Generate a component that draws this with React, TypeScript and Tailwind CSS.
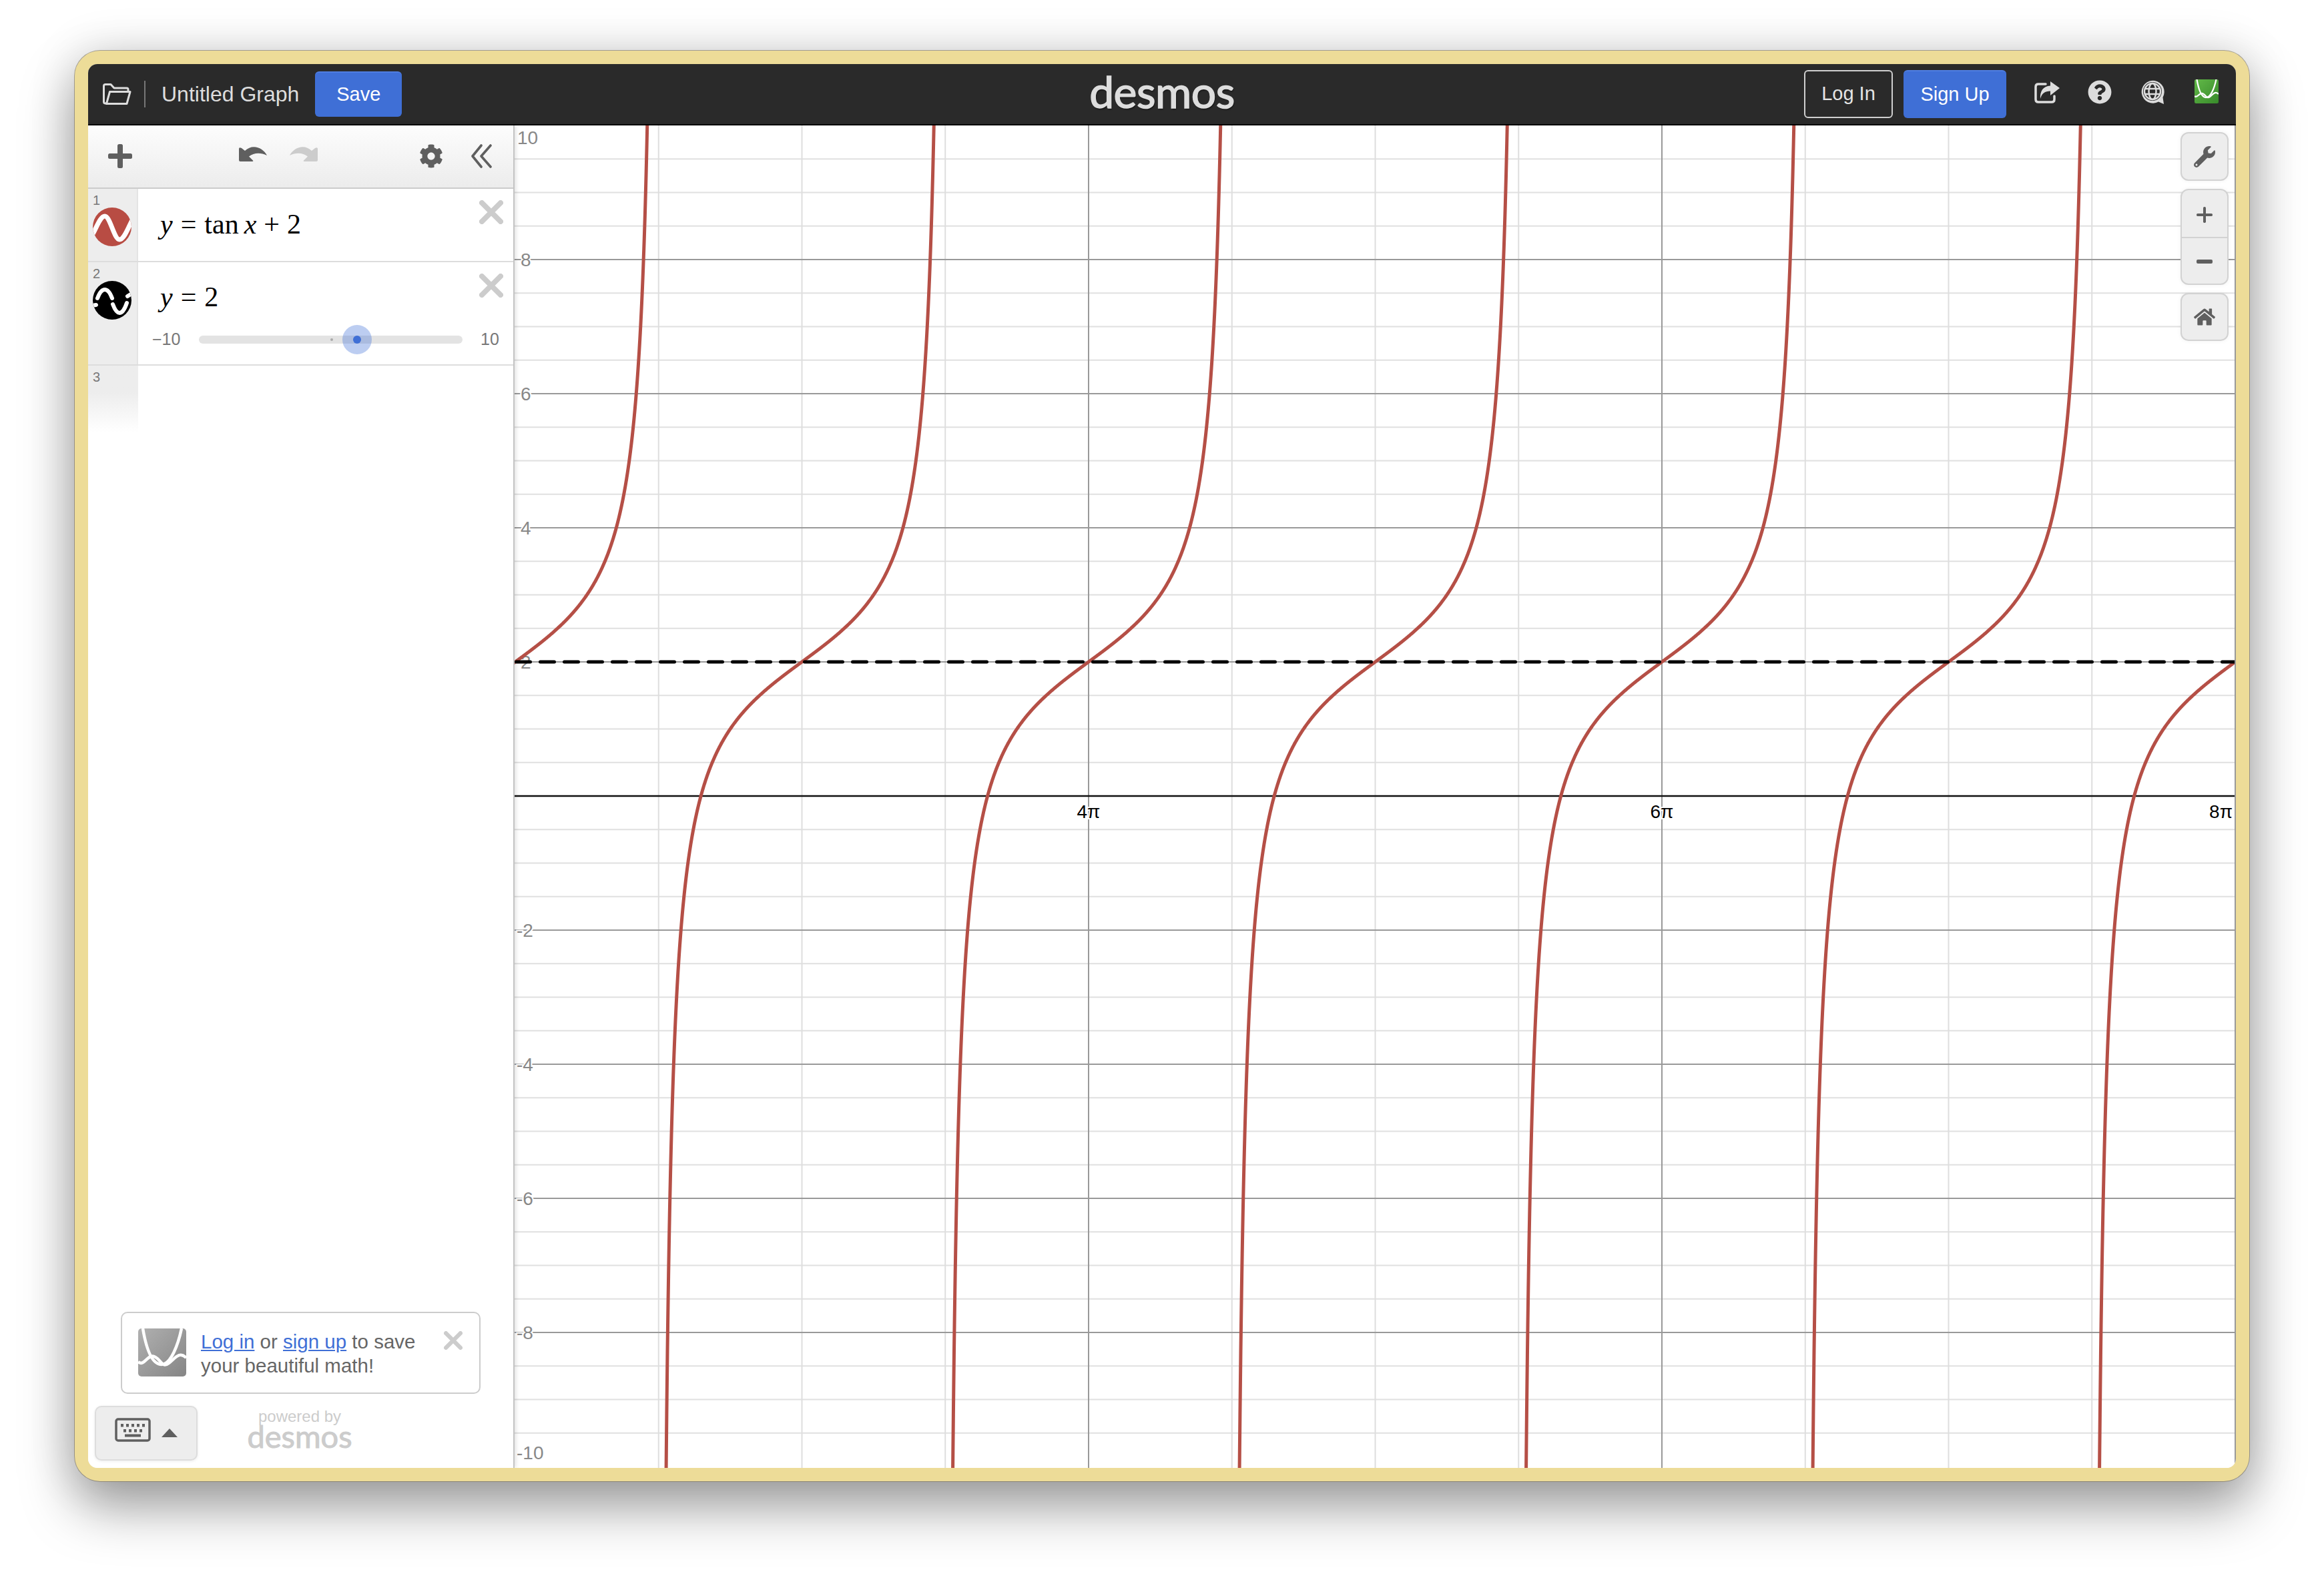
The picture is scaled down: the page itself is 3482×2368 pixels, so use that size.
import React from "react";
import { FaCog, FaQuestionCircle, FaWrench, FaHome } from "react-icons/fa";

const W = 2577;
const H = 2012;
const AX = 1005;
const UY = 100.5;
const PI_PX = 429.5;
const UX = PI_PX / Math.PI;

function branch(n: number) {
  const cx = 1 + PI_PX * n;
  const pts: string[] = [];
  for (let t = -1.55; t <= 1.55; t += 0.004) {
    const y = AX - UY * (Math.tan(t) + 2);
    if (y < -40 || y > H + 40) continue;
    pts.push(`${(cx + t * UX).toFixed(2)},${y.toFixed(2)}`);
  }
  return "M" + pts.join("L");
}

function Graph() {
  const hs: number[] = [];
  for (let k = -19; k <= 19; k++) hs.push(k);
  const vs: number[] = [];
  for (let k = 1; k <= 12; k++) vs.push(k);
  const ylabels = [8, 6, 4, 2, -2, -4, -6, -8];
  const labelStyle = { paintOrder: "stroke" as const, stroke: "#fff", strokeWidth: 4 };
  return (
    <svg width={W} height={H} viewBox={`0 0 ${W} ${H}`} className="block" fontFamily="'Liberation Sans', Arial, sans-serif">
      {hs.map((k) =>
        k === 0 || k % 4 === 0 ? null : (
          <line key={k} x1={0} x2={W} y1={AX - (k * UY) / 2} y2={AX - (k * UY) / 2} stroke="#e0e0e0" strokeWidth={2} />
        )
      )}
      {vs.map((k) =>
        k % 4 === 0 ? null : (
          <line key={k} x1={1 + (k * PI_PX) / 2} x2={1 + (k * PI_PX) / 2} y1={0} y2={H} stroke="#dedede" strokeWidth={2} />
        )
      )}
      {hs.map((k) =>
        k !== 0 && k % 4 === 0 ? (
          <line key={k} x1={0} x2={W} y1={AX - (k * UY) / 2} y2={AX - (k * UY) / 2} stroke="#999" strokeWidth={2} />
        ) : null
      )}
      {[4, 8].map((k) => (
        <line key={k} x1={1 + (k * PI_PX) / 2} x2={1 + (k * PI_PX) / 2} y1={0} y2={H} stroke="#999" strokeWidth={2} />
      ))}
      <line x1={0} x2={W} y1={AX} y2={AX} stroke="#111" strokeWidth={2.5} />
      {ylabels.map((v) => (
        <text key={v} x={v < 0 ? 3 : 9} y={AX - v * UY + 10} fontSize={28} fill="#888" style={labelStyle}>
          {v}
        </text>
      ))}
      <text x={4} y={28} fontSize={28} fill="#888" style={labelStyle}>10</text>
      <text x={3} y={1999} fontSize={28} fill="#888" style={labelStyle}>-10</text>
      <text x={860} y={AX + 33} textAnchor="middle" fontSize={28} fill="#000" style={labelStyle}>4π</text>
      <text x={1719} y={AX + 33} textAnchor="middle" fontSize={28} fill="#000" style={labelStyle}>6π</text>
      <text x={2574} y={AX + 33} textAnchor="end" fontSize={28} fill="#000" style={labelStyle}>8π</text>
      {[0, 1, 2, 3, 4, 5, 6].map((n) => (
        <path key={n} d={branch(n)} fill="none" stroke="#b54f46" strokeWidth={5} />
      ))}
      <line x1={2.5} x2={W} y1={AX - 2 * UY} y2={AX - 2 * UY} stroke="#000" strokeWidth={5} strokeDasharray="21 15" strokeLinecap="round" />
    </svg>
  );
}

function Plus({ size = 36, color = "#5f5f5f", t = 8 }: { size?: number; color?: string; t?: number }) {
  return (
    <svg width={size} height={size} viewBox="0 0 36 36">
      <rect x={(36 - t) / 2} y={0} width={t} height={36} rx={2.5} fill={color} />
      <rect x={0} y={(36 - t) / 2} width={36} height={t} rx={2.5} fill={color} />
    </svg>
  );
}

function Cross({ size = 36, w = 8 }: { size?: number; w?: number }) {
  return (
    <svg width={size} height={size} viewBox="0 0 36 36">
      <path d="M4 4L32 32M32 4L4 32" stroke="#cccccc" strokeWidth={w} strokeLinecap="round" fill="none" />
    </svg>
  );
}

function Folder() {
  return (
    <svg width={43} height={32} viewBox="0 0 43 32" fill="none" stroke="#dddddd" strokeWidth={3} strokeLinejoin="round">
      <path d="M7 30H4Q1.5 30 1.5 27.500V4Q1.500 1.500 4 1.500H12L17 7H36Q38 7 38 9V12" />
      <path d="M10.500 12.500H41L36 30.500H5.500Z" />
    </svg>
  );
}

function GlobeChat() {
  return (
    <svg width={38} height={38} viewBox="0 0 38 38" fill="none" stroke="#dddddd">
      <path d="M35 37L27 33.500A17 17 0 1 1 33.500 27Z" fill="#dddddd" stroke="none" />
      <circle cx={18} cy={18} r={14} fill="#2a2a2a" stroke="none" />
      <circle cx={18} cy={18} r={12} strokeWidth={2.500} />
      <ellipse cx={18} cy={18} rx={5.500} ry={12} strokeWidth={2.500} />
      <path d="M6 14H30M6 22H30" strokeWidth={2.500} />
    </svg>
  );
}

function Share() {
  return (
    <svg width={38} height={33} viewBox="0 0 38 33" fill="none">
      <path d="M17 4H6Q2 4 2 8V27Q2 31 6 31H26Q30 31 30 27V22" stroke="#dddddd" strokeWidth={3.500} strokeLinecap="round" />
      <path d="M24 0L38 10L24 21V14.500C16 14.500 11 18 9 26C8 15 13 7 24 6.500Z" fill="#dddddd" />
    </svg>
  );
}

function Undo({ color, flip }: { color: string; flip?: boolean }) {
  return (
    <svg width={42} height={24} viewBox="0 0 42 24" className={flip ? "-scale-x-100" : ""}>
      <path d="M0 5V22Q0 24 2 24H20Q22 24 21 22.500L15 16.500C22 11 32 10 42 15C36 3 20 -3 9 8L4 4Q0 2 0 5Z" fill={color} />
    </svg>
  );
}

function Logo({ from, to, id, size }: { from: string; to: string; id: string; size: number }) {
  return (
    <svg width={size} height={size} viewBox="0 0 72 72">
      <defs>
        <linearGradient id={id} x1="0" y1="0" x2="1" y2="1">
          <stop offset="0" stopColor={from} />
          <stop offset="1" stopColor={to} />
        </linearGradient>
      </defs>
      <rect width={72} height={72} rx={5} fill={`url(#${id})`} />
      <path d="M7 0C11 24 19 54 35 54C49 54 60 24 65 0" fill="none" stroke="#fff" strokeWidth={4.500} />
      <path d="M0 50C9 58 14 38 24 42S36 60 46 52S62 34 72 44" fill="none" stroke="#fff" strokeWidth={4.500} />
    </svg>
  );
}

function ExprIcon({ bg, dashed }: { bg: string; dashed?: boolean }) {
  const id = dashed ? "cb" : "cr";
  return (
    <svg width={58} height={58} viewBox="0 0 58 58" className="block">
      <clipPath id={id}>
        <circle cx={29} cy={29} r={29} />
      </clipPath>
      <circle cx={29} cy={29} r={29} fill={bg} />
      <g clipPath={`url(#${id})`} fill="none" stroke="#fff" strokeWidth={dashed ? 6 : 7} strokeLinecap="round">
        {dashed ? (
          <>
            <path d="M7 26C10 18 14 13 18 13C22 13 26 18 29 26" />
            <path d="M30 35C33 43 36 48 40 48C44 48 48 42 51 33" />
            <path d="M52 23L60 18" />
            <path d="M-2 37L5 36" />
          </>
        ) : (
          <path d="M-4 46C4 36 10 13 18 13C26 13 32 48 40 48C48 48 54 26 62 14" />
        )}
      </g>
    </svg>
  );
}

function Keyboard() {
  const r1 = [10, 18, 26, 34, 42];
  const r2 = [14, 22, 30, 38];
  return (
    <svg width={54} height={36} viewBox="0 0 54 36">
      <rect x={2} y={2} width={50} height={32} rx={3} fill="none" stroke="#5f5f5f" strokeWidth={3.500} />
      {r1.map((x) => <rect key={x} x={x - 1} y={9} width={4} height={4.500} fill="#5f5f5f" />)}
      {r2.map((x) => <rect key={x} x={x - 1} y={17} width={4} height={4.500} fill="#5f5f5f" />)}
      <rect x={15} y={24.500} width={24} height={4} fill="#5f5f5f" />
    </svg>
  );
}

function ToolBtn({ children, className }: { children: React.ReactNode; className: string }) {
  return (
    <div className={"flex items-center justify-center bg-[#ededed] border-2 border-[#d2d2d2] shadow-[0_0_6px_rgba(0,0,0,0.06)] " + className}>
      {children}
    </div>
  );
}

export default function App() {
  return (
    <div className="w-[3482px] h-[2368px] bg-white pl-[112px] pt-[76px] font-['Liberation_Sans',Arial,sans-serif]">
      <div className="w-[3258px] h-[2144px] rounded-[38px] border-[20px] border-[#eddc98] bg-[#eddc98] shadow-[0_0_0_1px_rgba(110,100,80,0.55),0_40px_80px_rgba(0,0,0,0.36),0_0_70px_rgba(0,0,0,0.14)]">
        <div className="w-full h-full rounded-[14px] overflow-hidden bg-white flex flex-col">
          {/* Header */}
          <header className="h-[92px] shrink-0 bg-[#2a2a2a] border-b-2 border-black grid grid-cols-[1fr_auto_1fr] items-center">
            <div className="flex items-center pl-[22px]">
              <Folder />
              <div className="w-[2px] h-[40px] bg-[#777] ml-[19px]" />
              <span className="ml-[24px] text-[32px] leading-none text-[#dddddd]">Untitled Graph</span>
              <button className="ml-[24px] w-[130px] h-[68px] rounded-[6px] bg-[#3f6fd6] border-t-2 border-[#4f7de0] text-white text-[29px]">Save</button>
            </div>
            <div className="text-[66px] leading-none font-['Lato',sans-serif] text-[#dddddd] tracking-[-0.5px] [-webkit-text-stroke:1.5px_#dddddd] -mt-[9px] [text-shadow:1px_2px_2px_rgba(0,0,0,0.6)]">desmos</div>
            <div className="flex items-center justify-end pr-[26px]">
              <button className="w-[133px] h-[72px] rounded-[6px] border-2 border-[#cfcfcf] text-[#e4e4e4] text-[29px]">Log In</button>
              <button className="ml-[16px] w-[154px] h-[72px] rounded-[6px] bg-[#3f6fd6] border-t-2 border-[#4f7de0] text-white text-[29px]">Sign Up</button>
              <div className="ml-[42px] -mt-[6px]"><Share /></div>
              <div className="ml-[42px] -mt-[6px]"><FaQuestionCircle size={36} color="#dddddd" /></div>
              <div className="ml-[43px] -mt-[6px]"><GlobeChat /></div>
              <div className="ml-[43px] -mt-[8px]"><Logo id="lg" from="#62b948" to="#388a2b" size={36} /></div>
            </div>
          </header>

          <div className="flex-1 flex min-h-0">
            {/* Expression panel */}
            <aside className="relative z-10 w-[639px] shrink-0 bg-white border-r-2 border-[#c4c4c4] shadow-[2px_0_6px_rgba(0,0,0,0.12)] flex flex-col">
              <div className="h-[95px] shrink-0 bg-gradient-to-b from-[#fdfdfd] to-[#ececec] border-b-2 border-[#cccccc] flex items-center pl-[30px] pb-[1px]">
                <Plus />
                <div className="ml-[160px] -mt-[8px]"><Undo color="#5f5f5f" /></div>
                <div className="ml-[34px] -mt-[8px]"><Undo color="#cccccc" flip /></div>
                <div className="ml-[152px]"><FaCog size={36} color="#5f5f5f" /></div>
                <svg className="ml-[41px]" width={32} height={36} viewBox="0 0 32 36" fill="none" stroke="#5f5f5f" strokeWidth={3.600} strokeLinecap="round" strokeLinejoin="round">
                  <path d="M16 2L3 18L16 34" />
                  <path d="M30 2L16 18L30 34" />
                </svg>
              </div>

              {/* Row 1 */}
              <div className="h-[110px] shrink-0 flex border-b-2 border-[#dddddd]">
                <div className="w-[75px] shrink-0 bg-[#ededed] border-r-2 border-[#e4e4e4] pl-[7px]">
                  <div className="text-[20px] leading-none text-[#777] pt-[7px] h-[28px]">1</div>
                  <ExprIcon bg="#b84c43" />
                </div>
                <div className="flex-1 relative pl-[33px] pt-[29px] font-['Liberation_Serif',serif] text-[42px] leading-[48px] text-black whitespace-nowrap">
                  <i>y</i><span className="mx-[12px]">=</span><span>tan</span><i className="ml-[8px]">x</i><span className="mx-[11px]">+</span><span>2</span>
                  <div className="absolute right-[15px] top-[17px]"><Cross /></div>
                </div>
              </div>

              {/* Row 2 */}
              <div className="h-[155px] shrink-0 flex border-b-2 border-[#dddddd]">
                <div className="w-[75px] shrink-0 bg-[#ededed] border-r-2 border-[#e4e4e4] pl-[7px]">
                  <div className="text-[20px] leading-none text-[#777] pt-[7px] h-[28px]">2</div>
                  <ExprIcon bg="#000000" dashed />
                </div>
                <div className="flex-1 relative pt-[28px] font-['Liberation_Serif',serif] text-[42px] leading-[48px] text-black whitespace-nowrap">
                  <div className="pl-[33px]">
                    <i>y</i><span className="mx-[12px]">=</span><span>2</span>
                  </div>
                  <div className="absolute right-[15px] top-[17px]"><Cross /></div>
                  <div className="mt-[27px] pl-[21px] flex items-center font-['Liberation_Sans',Arial,sans-serif] text-[25px] leading-none text-[#777]">
                    <span className="w-[44px]">−10</span>
                    <div className="ml-[26px] w-[395px] h-[12px] rounded-full bg-[#e3e3e3] relative">
                      <div className="absolute left-[197px] top-[4px] w-[4px] h-[4px] rounded-full bg-[#aaa]" />
                      <div className="absolute left-[215px] top-[-16px] w-[44px] h-[44px] rounded-full bg-[#3f6fd6]/35 flex items-center justify-center">
                        <div className="w-[12px] h-[12px] rounded-full bg-[#3f6fd6]" />
                      </div>
                    </div>
                    <span className="ml-[27px]">10</span>
                  </div>
                </div>
              </div>

              {/* Row 3 */}
              <div className="h-[100px] shrink-0 flex">
                <div className="w-[75px] shrink-0 bg-gradient-to-b from-[#ededed] from-40% to-white text-[20px] leading-none text-[#777] pt-[7px] pl-[7px]">3</div>
              </div>

              <div className="flex-1" />

              {/* Notice */}
              <div className="relative ml-[49px] w-[539px] h-[123px] shrink-0 rounded-[10px] border-2 border-[#cccccc] flex items-start pl-[24px] pt-[23px]">
                <Logo id="lg2" from="#b0b0b0" to="#858585" size={72} />
                <div className="ml-[22px] mt-[2px] text-[29.5px] leading-[36px] text-[#666]">
                  <a className="text-[#3f6fd6] underline">Log in</a> or <a className="text-[#3f6fd6] underline">sign up</a> to save
                  <br />
                  your beautiful math!
                </div>
                <div className="absolute right-[25px] top-[27px]"><Cross size={28} w={8} /></div>
              </div>

              {/* Keyboard row */}
              <div className="flex ml-[10px] mt-[18px] mb-[11px] shrink-0">
                <div className="w-[154px] h-[82px] rounded-[10px] bg-[#ededed] border-2 border-[#dddddd] shadow-[0_1px_4px_rgba(0,0,0,0.08)] flex items-start pl-[28px] pt-[16px]">
                  <Keyboard />
                  <svg className="ml-[16px] mt-[16px]" width={24} height={13} viewBox="0 0 24 13"><path d="M12 0L24 13H0Z" fill="#5f5f5f" /></svg>
                </div>
                <div className="ml-[75px] w-[156px] flex flex-col items-center text-[#cccccc]">
                  <span className="text-[24px] leading-[24px] mt-[4px]">powered by</span>
                  <span className="text-[47px] leading-[34px] font-['Lato',sans-serif] [-webkit-text-stroke:1px_#cccccc]">desmos</span>
                </div>
              </div>
            </aside>

            {/* Graph */}
            <main className="relative flex-1 bg-white border-r-2 border-[#999]">
              <Graph />
              <div className="absolute right-[9px] top-[10px] flex flex-col gap-[12px]">
                <ToolBtn className="w-[72px] h-[73px] rounded-[12px]"><FaWrench size={32} color="#5f5f5f" /></ToolBtn>
                <div className="w-[72px] h-[144px] rounded-[12px] bg-[#ededed] border-2 border-[#d2d2d2] flex flex-col shadow-[0_0_6px_rgba(0,0,0,0.06)]">
                  <div className="flex-1 flex items-center justify-center pt-[4px] border-b-2 border-[#d2d2d2]"><Plus size={24} t={6} /></div>
                  <div className="flex-1 flex items-center justify-center pt-[3px]">
                    <svg width={24} height={6} viewBox="0 0 24 6"><rect width={24} height={6} rx={2} fill="#5f5f5f" /></svg>
                  </div>
                </div>
                <ToolBtn className="w-[72px] h-[72px] rounded-[12px]"><FaHome size={32} color="#5f5f5f" /></ToolBtn>
              </div>
            </main>
          </div>
        </div>
      </div>
    </div>
  );
}
